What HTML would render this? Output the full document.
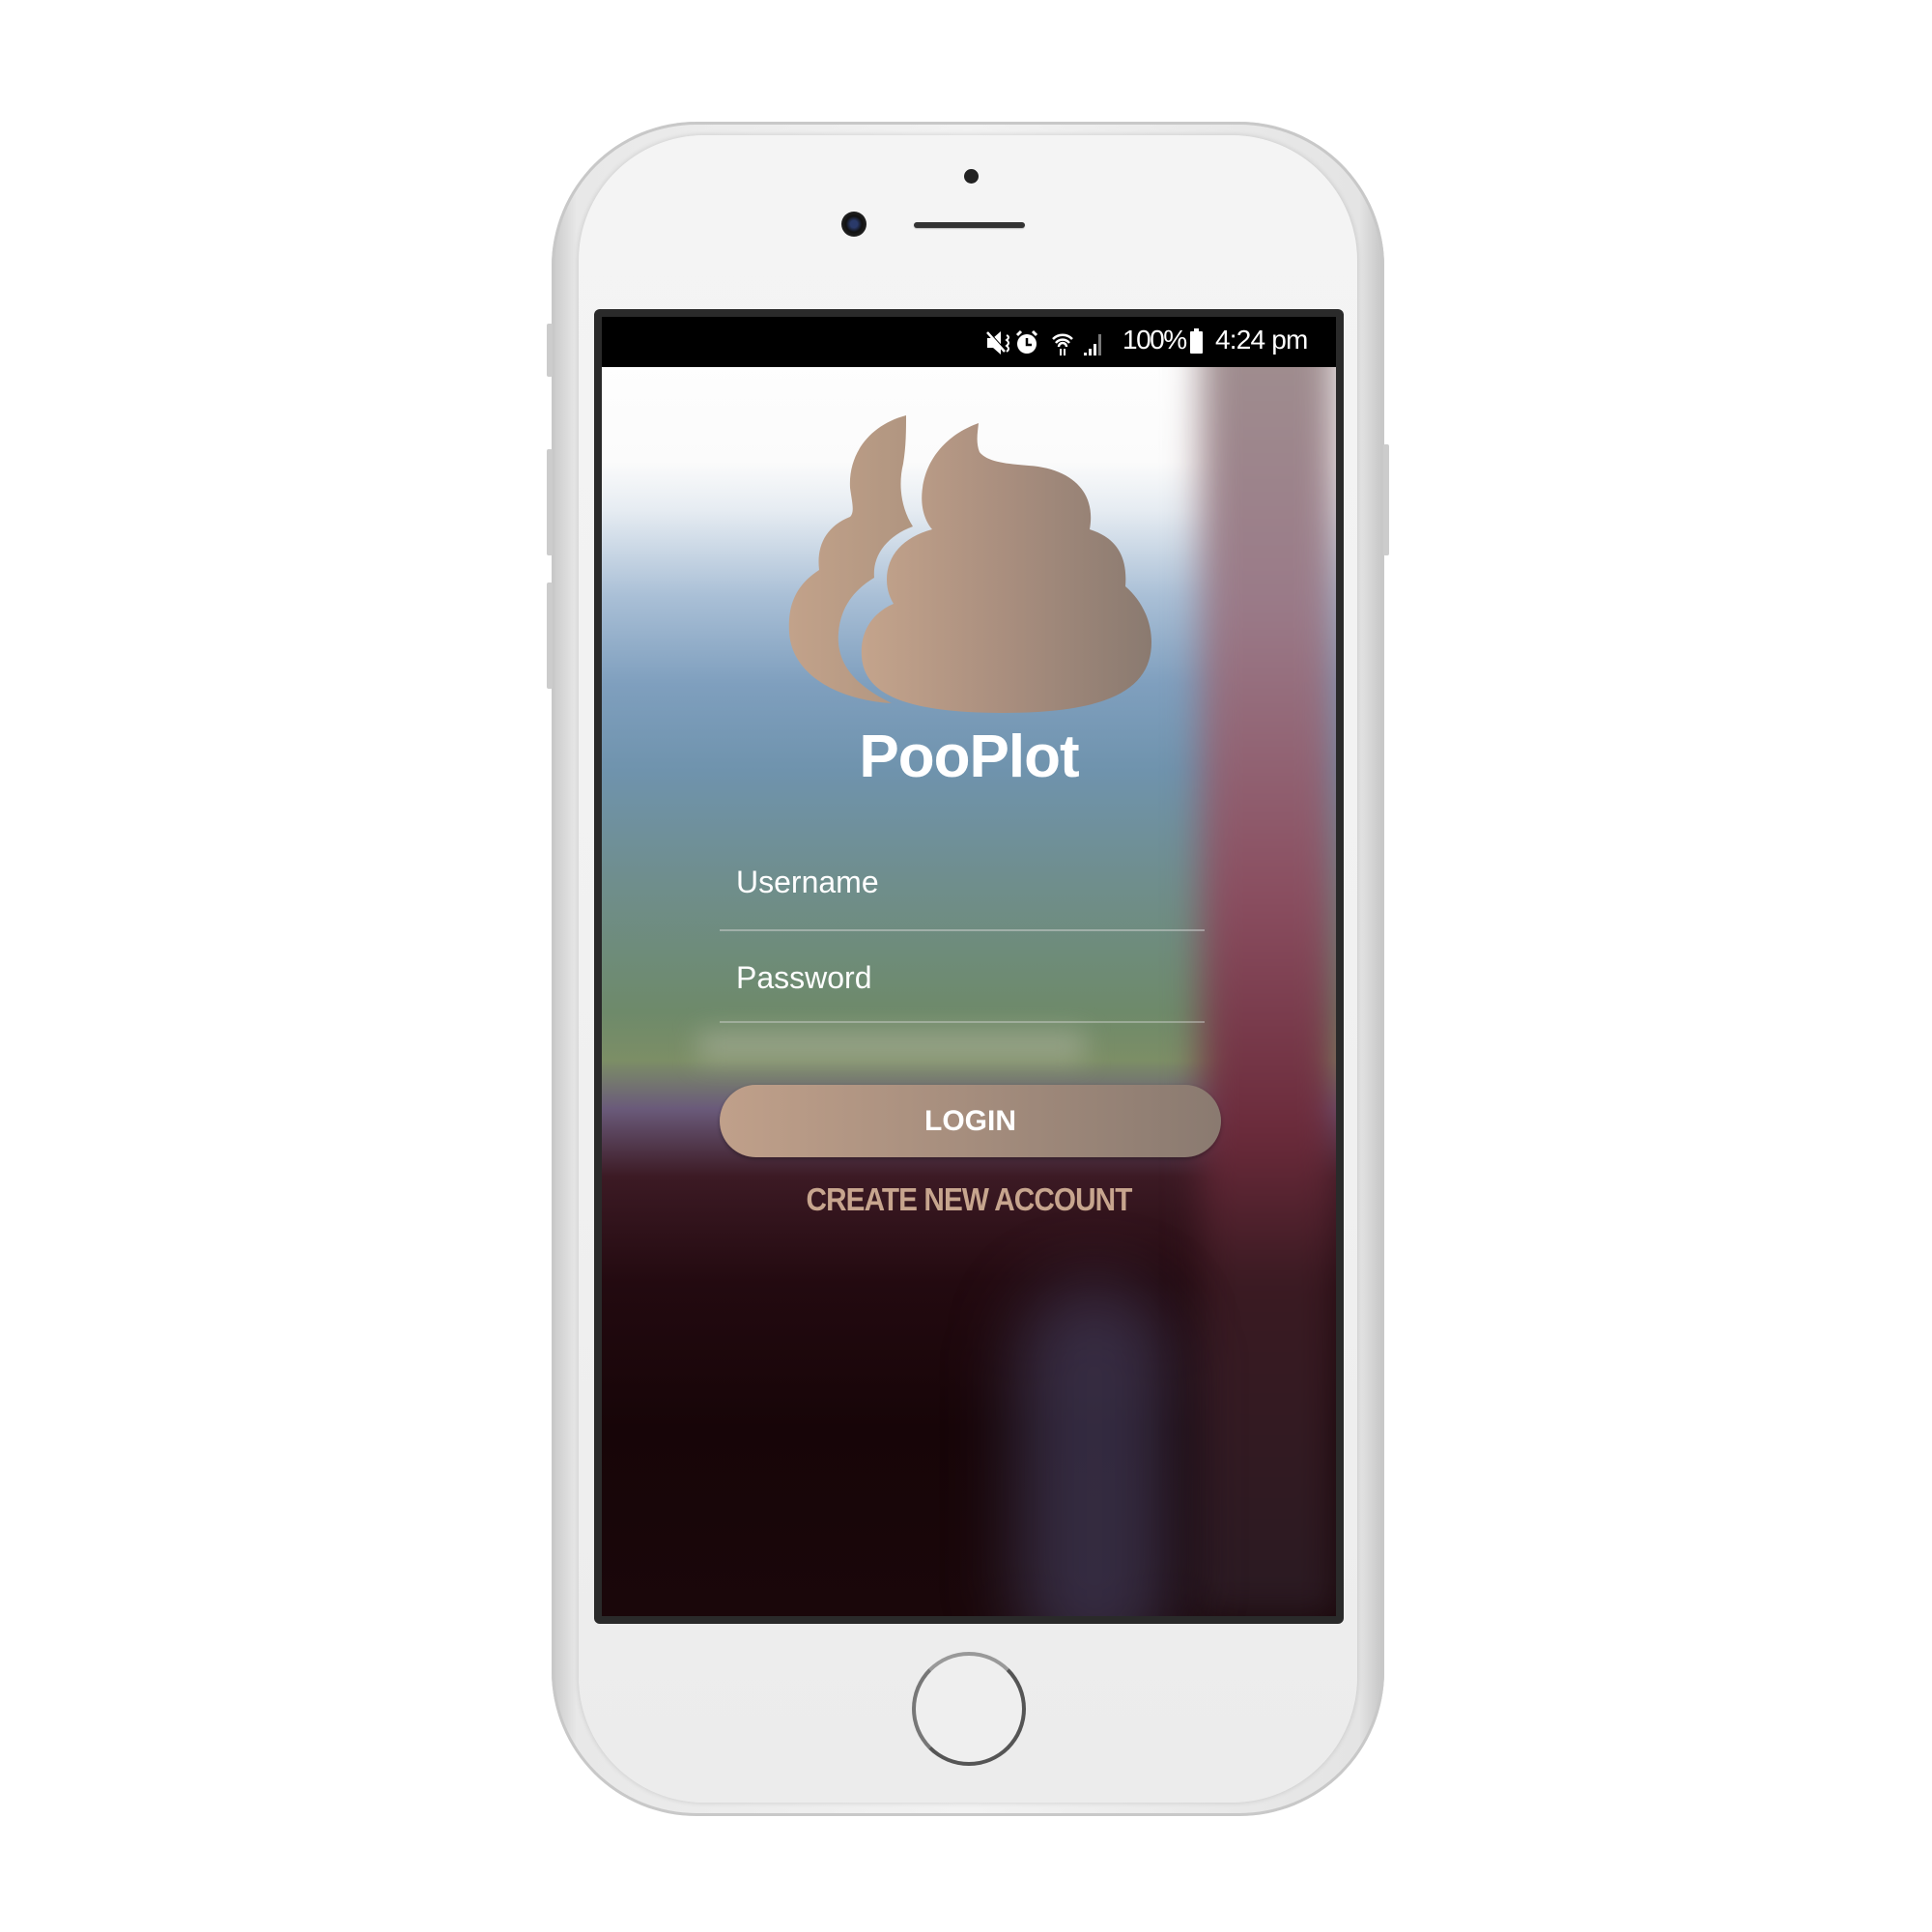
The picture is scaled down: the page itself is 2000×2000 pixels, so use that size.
<!DOCTYPE html>
<html><head><meta charset="utf-8"><style>
html,body{margin:0;padding:0;width:2000px;height:2000px;background:#fff;overflow:hidden;font-family:"Liberation Sans",sans-serif;}
.abs{position:absolute}
</style></head><body>
<!-- phone body -->
<div class="abs" style="left:571px;top:126px;width:862px;height:1754px;border-radius:150px;background:linear-gradient(90deg,#c8c8c8,#e8e8e8 3%,#f2f2f2 50%,#e4e4e4 97%,#c4c4c4);box-shadow:0 0 0 3px #c8c8c8 inset;"></div>
<div class="abs" style="left:599px;top:140px;width:806px;height:1726px;border-radius:130px;background:linear-gradient(180deg,#f4f4f4,#f1f1f1 50%,#ececec);box-shadow:0 0 6px rgba(0,0,0,0.15);"></div>
<!-- side buttons -->
<div class="abs" style="left:566px;top:335px;width:6px;height:55px;background:#ccc;border-radius:2px"></div>
<div class="abs" style="left:566px;top:465px;width:6px;height:110px;background:#ccc;border-radius:2px"></div>
<div class="abs" style="left:566px;top:603px;width:6px;height:110px;background:#ccc;border-radius:2px"></div>
<div class="abs" style="left:1432px;top:460px;width:6px;height:115px;background:#ccc;border-radius:2px"></div>
<!-- sensors -->
<div class="abs" style="left:998px;top:175px;width:15px;height:15px;border-radius:50%;background:#222"></div>
<div class="abs" style="left:871px;top:219px;width:26px;height:26px;border-radius:50%;background:radial-gradient(circle,#2a3a6a 20%,#111 45%,#333 100%)"></div>
<div class="abs" style="left:946px;top:230px;width:115px;height:6px;border-radius:3px;background:#333;box-shadow:0 1px 1px #bbb"></div>
<!-- home button -->
<div class="abs" style="left:944px;top:1710px;width:110px;height:110px;border-radius:50%;border:4px solid #555;border-top-color:#999;border-left-color:#777;background:#efefef"></div>
<!-- screen -->
<div class="abs" style="left:615px;top:320px;width:776px;height:1361px;background:#2a2a2a;border-radius:6px;"></div>
<div class="abs" style="left:623px;top:328px;width:760px;height:1345px;overflow:hidden;background:#1a070a;">
  <div class="abs" style="left:0;top:0;width:760px;height:1345px;
   background:
    linear-gradient(180deg,#ffffff 0,#fbfbfb 150px,#e6ecf2 200px,#a9bfd6 290px,#7f9fbe 380px,#6f93ad 470px,#6f8e8e 580px,#6e8a6a 720px,#7c8e66 770px,#6a5a7a 820px,#3c1a24 890px,#230a10 1000px,#170508 1150px,#1a070a 1345px);"></div>
  <div class="abs" style="left:620px;top:0;width:140px;height:1345px;background:linear-gradient(180deg,#a09090 0,#9a7a88 300px,#8a4e60 600px,#6a2a3a 850px,#3a1a22 1000px,#2a1a22 1345px);filter:blur(18px)"></div>
  <div class="abs" style="left:430px;top:1000px;width:160px;height:400px;border-radius:80px;background:rgba(80,80,120,0.5);filter:blur(35px)"></div>
  <div class="abs" style="left:100px;top:740px;width:400px;height:30px;background:rgba(230,220,220,0.3);filter:blur(14px)"></div>
  <!-- status bar -->
  <div class="abs" style="left:0;top:0;width:760px;height:52px;background:#000;color:#fff;font-size:28px;">
    <svg class="abs" style="left:397px;top:13px" width="130" height="28" viewBox="0 0 130 28">
      <path d="M2,9h6l8,-7v24l-8,-7h-6z" fill="#fff"/><path d="M2,2l20,22" stroke="#000" stroke-width="3"/><path d="M2,3l18,20" stroke="#fff" stroke-width="2.5"/>
      <path d="M22,6q4,2 0,5q4,3 0,6q4,3 0,6" stroke="#fff" stroke-width="2" fill="none"/>
      <circle cx="43" cy="15" r="10" fill="#fff"/><path d="M43,9v7h5" stroke="#000" stroke-width="2.5" fill="none"/><path d="M33,6l4,-4M53,6l-4,-4" stroke="#fff" stroke-width="3"/>
      <path d="M70,10a14,14 0 0 1 20,0M73,14a9,9 0 0 1 14,0M76,18a4,4 0 0 1 8,0" stroke="#fff" stroke-width="2.5" fill="none"/>
      <path d="M78,20v7M82,20v7" stroke="#fff" stroke-width="2"/>
      <path d="M102,27l0,-3h3v3zM107,27v-7h3v7zM112,27v-12h3v12z" fill="#fff"/><path d="M117,27v-22h3v22z" fill="#777"/>
    </svg>
    <span class="abs" style="left:539px;top:8px;letter-spacing:-1.5px">100%</span>
    <div class="abs" style="left:609px;top:15px;width:13px;height:23px;background:#fff;border-radius:1px"></div>
    <div class="abs" style="left:613px;top:12px;width:5px;height:4px;background:#fff"></div>
    <span class="abs" style="left:635px;top:8px;letter-spacing:-0.8px">4:24 pm</span>
  </div>
  <!-- logo -->
  <svg class="abs" style="left:0;top:0" width="760" height="1345" viewBox="623 328 760 1345">
    <defs><linearGradient id="g" x1="0" x2="1"><stop offset="0" stop-color="#c4a48c"/><stop offset="0.5" stop-color="#a98e7e"/><stop offset="1" stop-color="#8a7a70"/></linearGradient>
    <linearGradient id="g2" x1="0" x2="1"><stop offset="0" stop-color="#c2a28a"/><stop offset="1" stop-color="#b09580"/></linearGradient></defs>
    <path d="M938,430 C900,440 878,470 880,505 C882,520 885,530 880,535 C855,545 845,565 848,590 C825,605 815,625 817,655 C820,700 870,725 923,728 C890,712 865,690 868,655 C870,628 885,610 905,598 C903,575 918,555 945,545 C932,525 930,500 935,480 C938,462 938,445 938,430 Z" fill="url(#g2)"/>
    <path d="M1013,438 C985,448 960,470 955,505 C952,525 958,540 965,548 C935,556 918,575 918,600 C918,612 922,620 925,625 C902,635 890,655 892,680 C895,720 940,738 1040,738 C1150,738 1192,712 1192,665 C1192,640 1180,620 1165,607 C1168,570 1150,555 1128,548 C1135,510 1110,485 1065,482 C1040,480 1022,478 1014,468 C1010,458 1012,448 1013,438 Z" fill="url(#g)"/>
  </svg>
  <div class="abs" style="left:0;top:420px;width:760px;text-align:center;color:#fff;font-weight:bold;font-size:62px;letter-spacing:-1px">PooPlot</div>
  <div class="abs" style="left:139px;top:567px;color:#fff;font-size:32px">Username</div>
  <div class="abs" style="left:122px;top:634px;width:502px;height:2px;background:rgba(220,220,220,0.45)"></div>
  <div class="abs" style="left:139px;top:666px;color:#fff;font-size:32px">Password</div>
  <div class="abs" style="left:122px;top:729px;width:502px;height:2px;background:rgba(220,220,220,0.4)"></div>
  <div class="abs" style="left:122px;top:795px;width:519px;height:75px;border-radius:38px;background:linear-gradient(90deg,#c0a08a,#8a7a70);box-shadow:0 2px 4px rgba(0,0,0,0.3);color:#fff;font-size:30px;font-weight:bold;text-align:center;line-height:75px">LOGIN</div>
  <div class="abs" style="left:0;top:895px;width:760px;text-align:center;color:#c7a58e;font-size:33px;font-weight:bold;letter-spacing:-1px;transform:scaleX(0.9)">CREATE NEW ACCOUNT</div>
</div>
</body></html>
